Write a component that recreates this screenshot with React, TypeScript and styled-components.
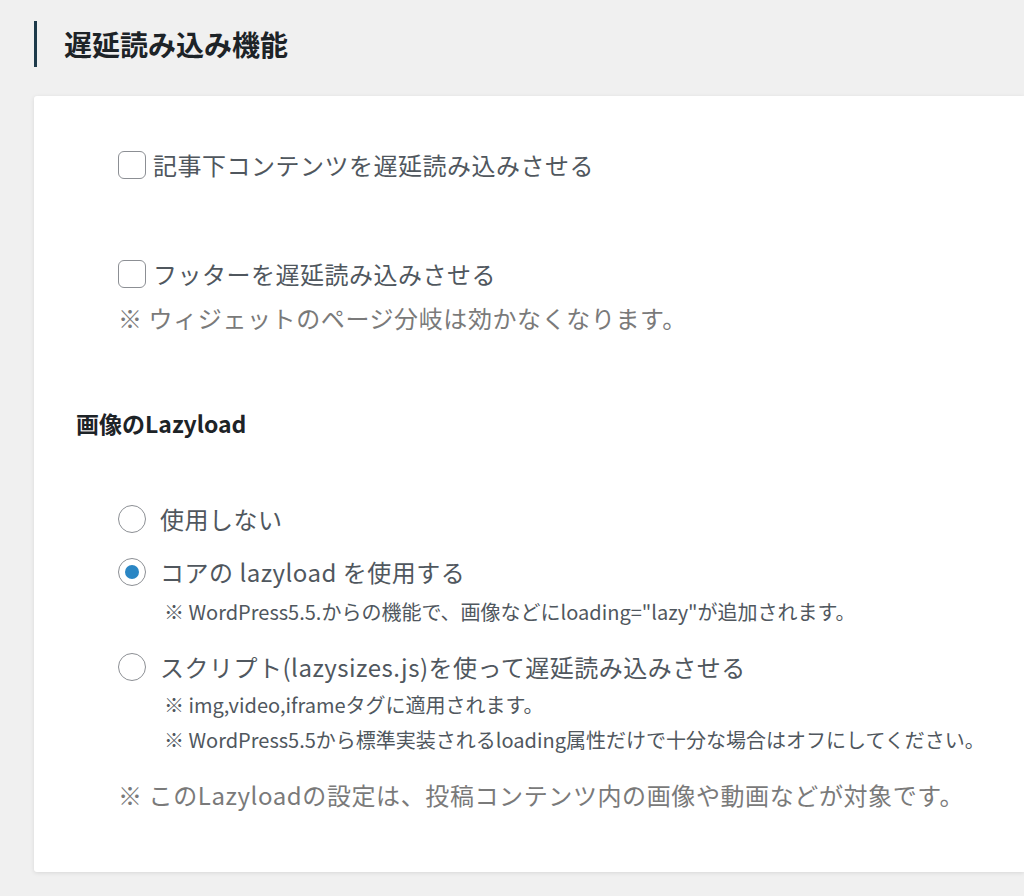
import React from "react";
import styled, { createGlobalStyle } from "styled-components";

const GlobalStyle = createGlobalStyle`
  html, body {
    margin: 0;
    padding: 0;
    background: #f0f0f0;
  }
  body {
    font-family: "Noto Sans CJK JP", "Noto Sans", sans-serif;
  }
`;

const Page = styled.div`
  width: 1024px;
  height: 896px;
  box-sizing: border-box;
  background: #f0f0f0;
  padding: 21px 0 0 34px;
  overflow: hidden;
`;

const TitleRow = styled.div`
  display: flex;
  align-items: center;
  height: 46px;
  border-left: 3px solid #1d3a4a;
  padding-left: 27px;
`;

const Title = styled.h2`
  margin: 0;
  font-size: 28px;
  font-weight: 700;
  color: #1d2327;
`;

const Card = styled.div`
  margin-top: 29px;
  background: #fff;
  border-radius: 3px 0 0 3px;
  box-shadow: 0 1px 4px rgba(0, 0, 0, 0.1);
  padding: 51px 0 61px 0;
  height: 776px;
  box-sizing: border-box;
`;

const Row = styled.label<{ $mt?: number; $gap?: number }>`
  display: flex;
  align-items: center;
  height: 36px;
  margin-top: ${(p) => p.$mt ?? 0}px;
  padding-left: 84px;
  gap: ${(p) => p.$gap ?? 7}px;
  font-size: 24px;
  letter-spacing: 0.5px;
  color: #50575e;
  line-height: 36px;
`;

const CheckBox = styled.span`
  width: 28px;
  height: 28px;
  box-sizing: border-box;
  border: 1.5px solid #8c8f94;
  border-radius: 6px;
  background: #fff;
  flex: none;
`;

const Radio = styled.span<{ $checked?: boolean }>`
  width: 28px;
  height: 28px;
  box-sizing: border-box;
  border: 1.5px solid #8c8f94;
  border-radius: 50%;
  background: #fff;
  flex: none;
  display: flex;
  align-items: center;
  justify-content: center;
  &::after {
    content: "";
    display: ${(p) => (p.$checked ? "block" : "none")};
    width: 14px;
    height: 14px;
    border-radius: 50%;
    background: #2a86c4;
  }
`;

const Note = styled.p<{ $mt?: number }>`
  margin: ${(p) => p.$mt ?? 0}px 0 0 0;
  padding-left: 84px;
  font-size: 24px;
  letter-spacing: 0.6px;
  line-height: 36px;
  color: #7a7a7a;
`;

const SubHeading = styled.h3`
  margin: 69px 0 0 0;
  padding-left: 42px;
  font-size: 23px;
  line-height: 36px;
  font-weight: 700;
  color: #1d2327;
`;

const SubNotes = styled.div<{ $mt?: number }>`
  margin-top: ${(p) => p.$mt ?? 0}px;
  padding-left: 130px;
  display: flex;
  flex-direction: column;
`;

const SubNote = styled.div`
  font-size: 20px;
  line-height: 35px;
  color: #50575e;
`;

export default function App() {
  return (
    <>
      <GlobalStyle />
      <Page>
        <TitleRow>
          <Title>遅延読み込み機能</Title>
        </TitleRow>
        <Card>
          <Row>
            <CheckBox />
            記事下コンテンツを遅延読み込みさせる
          </Row>
          <Row $mt={73}>
            <CheckBox />
            フッターを遅延読み込みさせる
          </Row>
          <Note $mt={8}>※ ウィジェットのページ分岐は効かなくなります。</Note>
          <SubHeading>画像のLazyload</SubHeading>
          <Row $mt={60} $gap={14}>
            <Radio />
            使用しない
          </Row>
          <Row $mt={17} $gap={14}>
            <Radio $checked />
            コアの lazyload を使用する
          </Row>
          <SubNotes $mt={4}>
            <SubNote>※ WordPress5.5.からの機能で、画像などにloading="lazy"が追加されます。</SubNote>
          </SubNotes>
          <Row $mt={20} $gap={14}>
            <Radio />
            スクリプト(lazysizes.js)を使って遅延読み込みさせる
          </Row>
          <SubNotes $mt={2}>
            <SubNote>※ img,video,iframeタグに適用されます。</SubNote>
            <SubNote>※ WordPress5.5から標準実装されるloading属性だけで十分な場合はオフにしてください。</SubNote>
          </SubNotes>
          <Note $mt={20}>※ このLazyloadの設定は、投稿コンテンツ内の画像や動画などが対象です。</Note>
        </Card>
      </Page>
    </>
  );
}
